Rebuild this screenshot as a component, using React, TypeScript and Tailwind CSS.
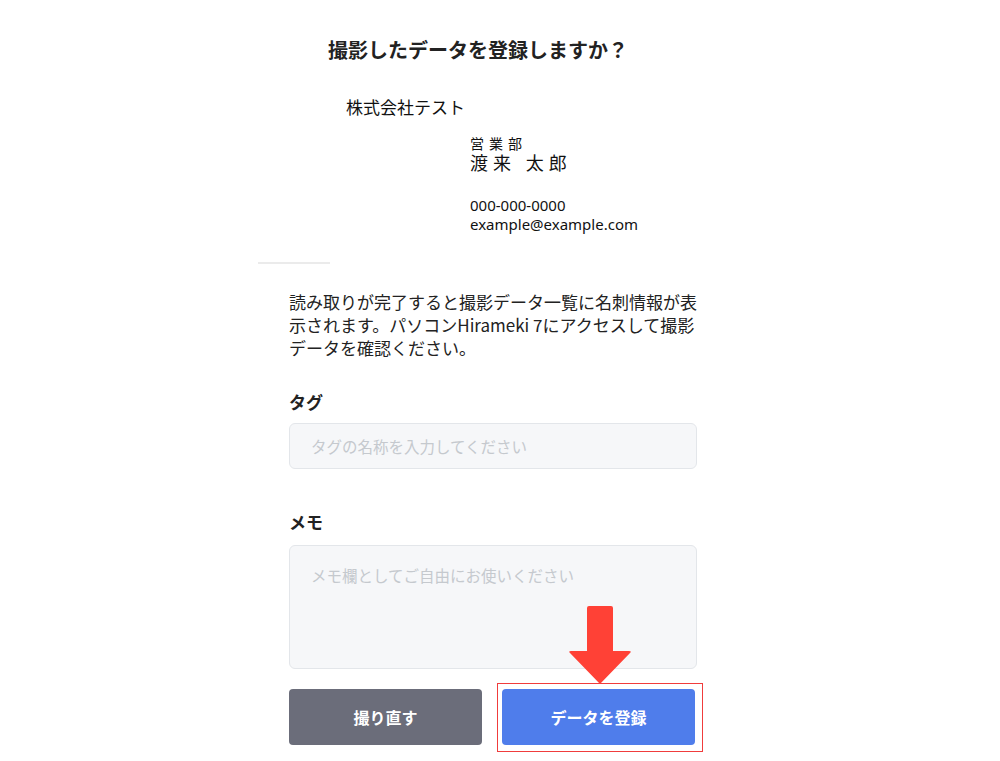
import React from "react";

const jp = { fontFamily: '"Noto Sans CJK JP", "Noto Sans", sans-serif' };
const card = { fontFamily: '"Noto Sans", "Noto Sans CJK JP", sans-serif' };

export default function App() {
  return (
    <div className="min-h-[761px] w-[1000px] bg-white" style={jp}>
      <div className="ml-[258px] flex w-[440px] flex-col pt-[36px]">
        <h1 className="text-center text-[20px] font-bold leading-[28px] text-[#222]">撮影したデータを登録しますか？</h1>

        {/* business card preview */}
        <div className="text-[#111]" style={card}>
          <p className="mt-[32px] whitespace-nowrap pl-[88px] text-[17px] leading-[24px]">株式会社テスト</p>
          <div className="mt-[16px] pl-[212px]">
            <p className="text-[14px] leading-[16px] tracking-[5px]">営業部</p>
            <p className="text-[18px] leading-[22px] tracking-[5px]">渡来 太郎</p>
            <p className="mt-[22px] text-[15px] leading-[19px]">000-000-0000</p>
            <p className="text-[15px] leading-[19px]">example@example.com</p>
          </div>
        </div>

        <div className="mt-[28px] h-[2px] w-[72px] bg-[#ebebeb]" />

        <div className="pl-[31px]">
          <p className="mt-[26px] whitespace-nowrap text-[17px] leading-[23px] text-[#222]">
            読み取りが完了すると撮影データ一覧に名刺情報が表
            <br />
            示されます。パソコンHirameki 7にアクセスして撮影
            <br />
            データを確認ください。
          </p>

          <label className="mt-[31px] block text-[17px] font-bold leading-[24px] text-[#222]">タグ</label>
          <input
            className="mt-[9px] h-[46px] w-[408px] rounded-[6px] border border-[#e3e6ea] bg-[#f6f7f9] px-[21px] text-[15.5px] outline-none placeholder:text-[#c5c9ce]"
            placeholder="タグの名称を入力してください"
          />

          <label className="mt-[41px] block text-[17px] font-bold leading-[24px] text-[#222]">メモ</label>
          <textarea
            className="mt-[11px] block h-[124px] w-[408px] resize-none rounded-[6px] border border-[#e3e6ea] bg-[#f6f7f9] px-[21px] pt-[17px] text-[15.5px] leading-[24px] outline-none placeholder:text-[#c5c9ce]"
            placeholder="メモ欄としてご自由にお使いください"
          />

          <div className="relative mt-[20px] flex gap-[20px]">
            <button className="h-[56px] w-[193px] rounded-[4px] bg-[#6b6d7a] text-[16px] font-semibold text-white">撮り直す</button>
            <div className="relative">
              <div className="absolute -left-[5px] -top-[6px] h-[69px] w-[206px] border border-[#f03c3c]" />
              <button className="relative h-[56px] w-[193px] rounded-[4px] bg-[#4f7deb] text-[16px] font-semibold text-white">データを登録</button>
            </div>
            <svg className="absolute left-[278px] top-[-83px]" width="66" height="79" viewBox="0 0 66 79">
              <path d="M20 2 Q20 0 22 0 H44 Q46 0 46 2 V45 H62 Q65 45 63 47 L33 78 L3 47 Q1 45 4 45 H20 Z" fill="#ff4136" />
            </svg>
          </div>
        </div>
      </div>
    </div>
  );
}
